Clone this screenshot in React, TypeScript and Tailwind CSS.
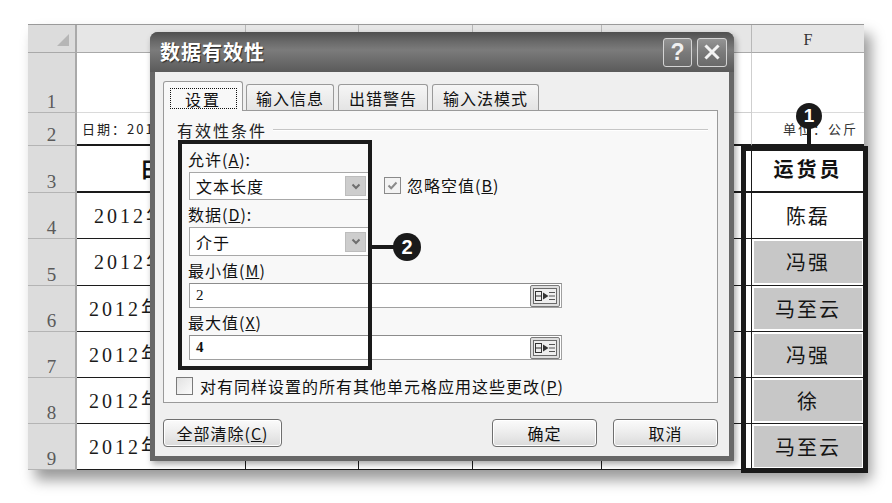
import React from "react";

const SERIF = "font-['Liberation_Serif','Noto_Sans_CJK_SC',serif]";
const CJK = "font-['Noto_Sans_CJK_SC','Liberation_Sans',sans-serif]";

function Acc({ pre, k, post }: { pre: string; k: string; post: string }) {
  return (
    <span className="inline-flex items-center">
      <span>{pre}</span>
      <span className="underline">{k}</span>
      <span>{post}</span>
    </span>
  );
}

function RowHead({ n }: { n: number }) {
  return (
    <div className="bg-[#dcdcdc] border-r-2 border-b border-r-[#a9a9a9] border-b-[#b4b4b4] flex items-end justify-center text-[19px] leading-[20px] text-[#5a5a5a] font-['Liberation_Serif',serif]">
      {n}
    </div>
  );
}

function ColHead({ t, last }: { t?: string; last?: boolean }) {
  return (
    <div
      className={`bg-[#e6e6e6] border-b border-b-[#a9a9a9] flex items-center justify-center pt-[3px] text-[16px] text-[#333] font-['Liberation_Serif',serif] ${
        last ? "" : "border-r border-r-[#b8b8b8]"
      }`}
    >
      {t}
    </div>
  );
}

function Chevron() {
  return (
    <svg width="10" height="7" viewBox="0 0 10 7">
      <path d="M1.5 1.5 L5 5 L8.5 1.5" fill="none" stroke="#6e6e6e" strokeWidth="2" />
    </svg>
  );
}

function Combo({ text, h }: { text: string; h: string }) {
  return (
    <div className={`${h} w-[180px] ml-[1px] bg-white border border-[#a8a8a8] flex items-center justify-between pl-[6px] pr-[2px]`}>
      <span className="text-[16px] tracking-[1px] text-[#111]">{text}</span>
      <div className="w-[21px] h-[20px] bg-[#cdcdcd] border border-[#bdbdbd] flex items-center justify-center">
        <Chevron />
      </div>
    </div>
  );
}

function RangeBtn() {
  return (
    <div className="w-[30px] h-[22px] border border-[#7a7a7a] bg-[#dedede] rounded-[2px] flex items-center justify-center">
      <svg width="24" height="16" viewBox="0 0 24 16">
        <rect x="0.5" y="0.5" width="23" height="15" fill="#eeeeee" stroke="#6a6a6a" />
        <rect x="2.5" y="3.5" width="6" height="9" fill="none" stroke="#333" />
        <line x1="2.5" y1="8" x2="8.5" y2="8" stroke="#333" />
        <path d="M10 4.5 L15.5 8 L10 11.5 Z" fill="#333" />
        <line x1="16" y1="4.5" x2="22" y2="4.5" stroke="#555" />
        <line x1="16" y1="8" x2="22" y2="8" stroke="#555" />
        <line x1="16" y1="11.5" x2="22" y2="11.5" stroke="#555" />
      </svg>
    </div>
  );
}

function InputRow({ v, bold }: { v: string; bold?: boolean }) {
  return (
    <div className="h-[25px] w-[373px] ml-[1px] bg-white border border-[#a0a0a0] border-t-[#8c8c8c] flex items-center justify-between pl-[6px] pr-[1px]">
      <span className={`text-[15px] text-[#111] font-['Liberation_Serif',serif] ${bold ? "font-bold" : ""}`}>{v}</span>
      <RangeBtn />
    </div>
  );
}

function Btn({ children, w }: { children: React.ReactNode; w: string }) {
  return (
    <div
      className={`${w} h-[28px] rounded-[4px] border border-[#6f6f6f] bg-[linear-gradient(180deg,#fbfbfb_0%,#ececec_50%,#dadada_100%)] shadow-[inset_0_0_0_1px_#ffffff] flex items-center justify-center text-[16px] tracking-[1px] text-[#111]`}
    >
      {children}
    </div>
  );
}

export default function App() {
  const rows = [
    { s: true, n: "陈磊", g: false },
    { s: true, n: "冯强", g: true },
    { s: false, n: "马至云", g: true },
    { s: false, n: "冯强", g: true },
    { s: false, n: "徐", g: true },
    { s: false, n: "马至云", g: true },
  ];

  return (
    <div className={`relative w-[892px] h-[503px] bg-white overflow-hidden ${CJK}`}>
      {/* Spreadsheet */}
      <div className="pl-[28px] pt-[24px]">
        <div className="w-[836px] border-t border-[#9a9a9a] bg-white shadow-[7px_10px_13px_rgba(0,0,0,0.4)] grid grid-cols-[49px_169px_113px_114px_129px_150px_112px] grid-rows-[28px_60px_33px_47px_46px_47px_46px_46px_46px_46px]">
          {/* header row */}
          <div className="relative bg-[#dcdcdc] border-r-2 border-b border-r-[#a9a9a9] border-b-[#a9a9a9]">
            <div className="absolute right-[6px] bottom-[6px] w-0 h-0 border-l-[12px] border-l-transparent border-b-[12px] border-b-[#b6b6b6]" />
          </div>
          <ColHead />
          <ColHead />
          <ColHead />
          <ColHead />
          <ColHead />
          <ColHead t="F" last />

          {/* row 1 */}
          <RowHead n={1} />
          <div className="border-r border-b border-[#dadada]" />
          <div className="border-r border-b border-[#dadada]" />
          <div className="border-r border-b border-[#dadada]" />
          <div className="border-r border-b border-[#dadada]" />
          <div className="border-r border-b border-[#cfcfcf]" />
          <div className="border-b border-[#dadada]" />

          {/* row 2 */}
          <RowHead n={2} />
          <div className="border-r border-r-[#dadada] border-b-2 border-b-[#1a1a1a] flex items-center pl-[5px] whitespace-nowrap overflow-hidden text-[13px] tracking-[2px] text-[#222]">
            <span>日期：201</span>
          </div>
          <div className="border-r border-r-[#dadada] border-b-2 border-b-[#1a1a1a]" />
          <div className="border-r border-r-[#dadada] border-b-2 border-b-[#1a1a1a]" />
          <div className="border-r border-r-[#dadada] border-b-2 border-b-[#1a1a1a]" />
          <div className="border-r border-r-[#cfcfcf] border-b-2 border-b-[#1a1a1a]" />
          <div className="border-b-2 border-b-[#1a1a1a] flex items-center justify-end pr-[6px] whitespace-nowrap text-[13px] tracking-[2px] text-[#333]">
            单位：公斤
          </div>

          {/* row 3 */}
          <RowHead n={3} />
          <div className="border-r border-b-2 border-[#1a1a1a] flex items-center justify-center font-bold text-[21px] text-[#111]">
            <span className="-ml-[21px]">日</span>
          </div>
          <div className="border-r border-b-2 border-[#1a1a1a]" />
          <div className="border-r border-b-2 border-[#1a1a1a]" />
          <div className="border-r border-b-2 border-[#1a1a1a]" />
          <div className="border-r border-b-2 border-[#1a1a1a]" />
          <div className="border-b-2 border-[#1a1a1a] p-[2px] bg-white">
            <div className="h-full bg-white flex items-center justify-center font-bold text-[20px] tracking-[3px] text-[#111]">
              运货员
            </div>
          </div>

          {/* rows 4-9 */}
          {rows.map((r, i) => (
            <React.Fragment key={i}>
              <RowHead n={i + 4} />
              <div
                className={`border-r border-b border-[#1c1c1c] flex items-center whitespace-nowrap overflow-hidden text-[20px] tracking-[3px] text-[#1a1a1a] ${SERIF} ${
                  r.s ? "pl-[17px]" : "pl-[12px]"
                }`}
              >
                2012年
              </div>
              <div className="border-r border-b border-[#1c1c1c]" />
              <div className="border-r border-b border-[#1c1c1c]" />
              <div className="border-r border-b border-[#1c1c1c]" />
              <div className="border-r border-b border-[#1c1c1c]" />
              <div className="border-b border-[#1c1c1c] p-[2px] bg-white">
                <div
                  className={`h-full flex items-center justify-center text-[20px] tracking-[2px] text-[#151515] ${
                    r.g ? "bg-[#c7c7c7]" : "bg-white"
                  }`}
                >
                  {r.n}
                </div>
              </div>
            </React.Fragment>
          ))}
        </div>
      </div>

      {/* F column highlight box */}
      <div className="absolute left-[741px] top-[146px] w-[127px] h-[327px] border-[5px] border-[#1a1a1a]" />

      {/* Callout 1 */}
      <div className="absolute left-[807px] top-[127px] w-[4px] h-[21px] bg-[#1a1a1a]" />
      <div className="absolute left-[796px] top-[103px] w-[26px] h-[26px] rounded-full bg-[#1a1a1a] flex items-center justify-center text-white font-bold text-[19px] font-['Liberation_Sans',sans-serif]">
        1
      </div>

      {/* Dialog */}
      <div className="absolute left-[150px] top-[32px] w-[584px] h-[429px] flex flex-col rounded-t-[8px] bg-[#676767] shadow-[2px_3px_6px_rgba(0,0,0,0.35)] overflow-hidden">
        <div className="h-[40px] shrink-0 flex items-center justify-between pl-[10px] pr-[7px] bg-[linear-gradient(180deg,#4f4f4f_0%,#6a6a6a_25%,#7b7b7b_45%,#6c6c6c_70%,#5a5a5a_100%)]">
          <span className="text-white font-bold text-[20px] tracking-[1px] [text-shadow:1px_1px_1px_#2a2a2a]">数据有效性</span>
          <div className="flex gap-[5px]">
            <div className="w-[29px] h-[29px] rounded-[3px] border border-[#d4d4d4] bg-[linear-gradient(180deg,#949494_0%,#7a7a7a_50%,#6a6a6a_100%)] flex items-center justify-center text-[#f0f0f0] text-[23px] leading-none font-bold font-['Liberation_Sans',sans-serif]">
              ?
            </div>
            <div className="w-[30px] h-[29px] rounded-[3px] border border-[#d4d4d4] bg-[linear-gradient(180deg,#949494_0%,#7a7a7a_50%,#6a6a6a_100%)] flex items-center justify-center">
              <svg width="16" height="16" viewBox="0 0 16 16">
                <path d="M2.5 2.5 L13.5 13.5 M13.5 2.5 L2.5 13.5" stroke="#f4f4f4" strokeWidth="3" strokeLinecap="square" />
              </svg>
            </div>
          </div>
        </div>

        <div className="flex-1 mx-[5px] mb-[5px] bg-[#efefef] flex flex-col pl-[8px] pt-[9px]">
          {/* Tabs */}
          <div className="h-[29px] flex items-end text-[16px] text-[#111]">
            <div className="relative z-10 h-[30px] w-[80px] -mb-[1px] bg-[#f8f8f8] border border-b-0 border-[#9a9a9a] rounded-t-[3px] flex justify-center pt-[6px]">
              <div className="w-[67px] h-[21px] border border-dotted border-[#111] flex items-center justify-center tracking-[2px]">
                设置
              </div>
            </div>
            <div className="ml-[3px] h-[26px] w-[88px] bg-[linear-gradient(180deg,#f6f6f6_0%,#e4e4e4_100%)] border border-b-0 border-[#9a9a9a] rounded-t-[3px] flex items-center justify-center tracking-[1px]">
              输入信息
            </div>
            <div className="ml-[4px] h-[26px] w-[90px] bg-[linear-gradient(180deg,#f6f6f6_0%,#e4e4e4_100%)] border border-b-0 border-[#9a9a9a] rounded-t-[3px] flex items-center justify-center tracking-[1px]">
              出错警告
            </div>
            <div className="ml-[4px] h-[26px] w-[107px] bg-[linear-gradient(180deg,#f6f6f6_0%,#e4e4e4_100%)] border border-b-0 border-[#9a9a9a] rounded-t-[3px] flex items-center justify-center tracking-[1px]">
              输入法模式
            </div>
          </div>

          {/* Panel */}
          <div className="h-[293px] w-[555px] bg-[#f8f8f8] border border-[#9a9a9a] flex flex-col text-[#111]">
            <div className="mt-[11px] h-[16px] pl-[13px] pr-[9px] flex items-center gap-[6px]">
              <span className="text-[16px] leading-[16px] tracking-[2px] text-[#222]">有效性条件</span>
              <div className="flex-1 h-[2px] border-t border-t-[#c6c6c6] border-b border-b-white" />
            </div>

            <div className="pl-[24px] flex flex-col">
              <div className="mt-[12px] h-[18px] flex items-center text-[16px] leading-[18px] tracking-[1px]">
                <Acc pre="允许(" k="A" post="):" />
              </div>
              <div className="mt-[4px] flex items-start">
                <Combo text="文本长度" h="h-[28px]" />
                <div className="ml-[15px] mt-[1px] flex items-center gap-[6px]">
                  <div className="w-[17px] h-[17px] border border-[#8a8a8a] bg-[#f3f3f3] flex items-center justify-center">
                    <svg width="13" height="13" viewBox="0 0 13 13">
                      <path d="M2.5 6.5 L5.2 9.2 L10.5 3.5" fill="none" stroke="#8a8a8a" strokeWidth="2" />
                    </svg>
                  </div>
                  <div className="text-[16px] tracking-[1px]">
                    <Acc pre="忽略空值(" k="B" post=")" />
                  </div>
                </div>
              </div>

              <div className="mt-[5px] h-[18px] flex items-center text-[16px] leading-[18px] tracking-[1px]">
                <Acc pre="数据(" k="D" post="):" />
              </div>
              <div className="mt-[4px]">
                <Combo text="介于" h="h-[29px]" />
              </div>

              <div className="mt-[5px] h-[18px] flex items-center text-[16px] leading-[18px] tracking-[1px]">
                <Acc pre="最小值(" k="M" post=")" />
              </div>
              <div className="mt-[4px]">
                <InputRow v="2" />
              </div>

              <div className="mt-[5px] h-[18px] flex items-center text-[16px] leading-[18px] tracking-[1px]">
                <Acc pre="最大值(" k="X" post=")" />
              </div>
              <div className="mt-[4px]">
                <InputRow v="4" bold />
              </div>
            </div>

            <div className="mt-[14px] pl-[12px] flex items-center gap-[7px]">
              <div className="w-[17px] h-[18px] border border-[#7a7a7a] bg-[linear-gradient(135deg,#e2e2e2_0%,#fbfbfb_100%)]" />
              <div className="text-[16px] tracking-[1px] text-[#111]">
                <Acc pre="对有同样设置的所有其他单元格应用这些更改(" k="P" post=")" />
              </div>
            </div>
          </div>

          {/* Buttons */}
          <div className="mt-[16px] w-[555px] flex items-center">
            <Btn w="w-[119px]">
              <Acc pre="全部清除(" k="C" post=")" />
            </Btn>
            <div className="flex-1" />
            <Btn w="w-[105px]">确定</Btn>
            <div className="w-[16px]" />
            <Btn w="w-[105px]">取消</Btn>
          </div>
        </div>
      </div>

      {/* Callout box over dialog fields */}
      <div className="absolute left-[178px] top-[140px] w-[194px] h-[230px] border-[4px] border-[#1a1a1a]" />

      {/* Callout 2 */}
      <div className="absolute left-[371px] top-[245px] w-[24px] h-[4px] bg-[#1a1a1a]" />
      <div className="absolute left-[393px] top-[233px] w-[28px] h-[28px] rounded-full bg-[#1a1a1a] flex items-center justify-center text-white font-bold text-[20px] font-['Liberation_Sans',sans-serif]">
        2
      </div>
    </div>
  );
}
